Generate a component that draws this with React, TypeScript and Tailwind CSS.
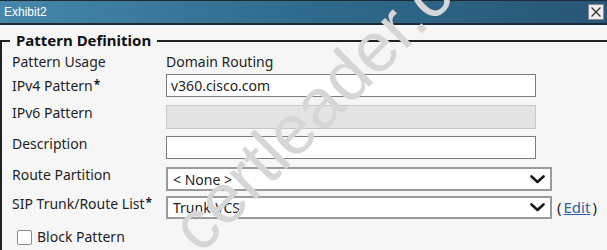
import React from 'react';

const Chevron = () => (
  <svg width="15" height="9" viewBox="0 0 15 9" className="shrink-0">
    <path d="M1.5 1.5 L7.5 7 L13.5 1.5" fill="none" stroke="#1a1a1a" strokeWidth="2.6" strokeLinecap="round" strokeLinejoin="round" />
  </svg>
);

const App = () => {
  const labelCls = "w-[164px] pl-[10px] shrink-0 text-[14px] leading-[16px] text-[#1e1e1e]";

  return (
    <div className="relative w-[607px] h-[250px] overflow-hidden bg-[#f6f6f6] font-['Noto_Sans',sans-serif] text-[#1e1e1e]">
      {/* Title bar */}
      <div className="h-[25px] border-t border-b-2 border-[#1b2a35] bg-gradient-to-r from-[#4587aa] via-[#2f6b8d] to-[#285676] flex items-center justify-between">
        <span className="pl-[4px] text-[12px] text-white font-['Liberation_Sans',sans-serif]">Exhibit2</span>
        <div className="mr-[3px] w-[16px] h-[16px] bg-[#efefef] border border-[#8a8a8a] flex items-center justify-center">
          <svg width="12" height="12" viewBox="0 0 12 12">
            <path d="M1.5 1.5 L10.5 10.5 M10.5 1.5 L1.5 10.5" stroke="#333" strokeWidth="1.4" />
          </svg>
        </div>
      </div>

      {/* Legend */}
      <div className="mt-[5px] h-[20px] flex">
        <div className="w-[10px] h-[10px] self-end border-t-2 border-l-2 border-[#222]" />
        <span className="px-[6px] text-[15px] leading-[20px] font-bold text-[#111]">Pattern Definition</span>
        <div className="flex-1 h-[10px] self-end border-t-2 border-[#222]" />
      </div>

      {/* Body */}
      <div className="border-l-2 border-[#222] h-[200px]">
        <div className="h-[24px] flex items-center">
          <span className={labelCls}>Pattern Usage</span>
          <span className="text-[14px] leading-[16px]">Domain Routing</span>
        </div>

        <div className="flex items-start">
          <span className={`${labelCls} pt-[4px]`}>IPv4 Pattern<sup className="text-[12px] font-bold ml-[1px] relative -top-[2px]">*</sup></span>
          <div className="w-[370px] h-[23px] bg-white border border-[#7c7c7c] flex items-center pl-[4px] text-[14px]">v360.cisco.com</div>
        </div>

        <div className="flex items-start mt-[8px]">
          <span className={labelCls}>IPv6 Pattern</span>
          <div className="w-[370px] h-[24px] bg-[#e4e4e4] border border-[#c6c6c6]" />
        </div>

        <div className="flex items-start mt-[7px]">
          <span className={labelCls}>Description</span>
          <div className="w-[370px] h-[23px] bg-white border border-[#7c7c7c]" />
        </div>

        <div className="flex items-start mt-[8px]">
          <span className={labelCls}>Route Partition</span>
          <div className="w-[386px] h-[24px] bg-white border-2 border-[#9a9a9a] flex items-center justify-between pl-[5px] pr-[5px] text-[14px]">
            <span>&lt; None &gt;</span>
            <Chevron />
          </div>
        </div>

        <div className="flex items-start mt-[5px]">
          <span className={labelCls}>SIP Trunk/Route List<sup className="text-[12px] font-bold ml-[1px] relative -top-[2px]">*</sup></span>
          <div className="w-[386px] h-[23px] bg-white border-2 border-[#9a9a9a] flex items-center justify-between pl-[5px] pr-[5px] text-[14px]">
            <span>Trunk-VCS</span>
            <Chevron />
          </div>
          <span className="ml-[5px] text-[15px] leading-[22px] flex">
            <span>(</span>
            <span className="mx-[2px] text-[#2a64a8] underline">Edit</span>
            <span>)</span>
          </span>
        </div>

        <div className="flex items-center mt-[10px] pl-[15px]">
          <div className="w-[15px] h-[15px] bg-white border border-[#8a8a8a] rounded-[2px]" />
          <span className="ml-[5px] text-[14px] leading-[16px]">Block Pattern</span>
        </div>
      </div>

      {/* Watermark */}
      <span className="pointer-events-none absolute left-[208px] top-[193px] origin-bottom-left -rotate-45 whitespace-nowrap font-['Liberation_Sans',sans-serif] text-[70px] leading-[70px] text-[#d6d6d6]">
        certleader.com
      </span>
    </div>
  );
};

export default App;
